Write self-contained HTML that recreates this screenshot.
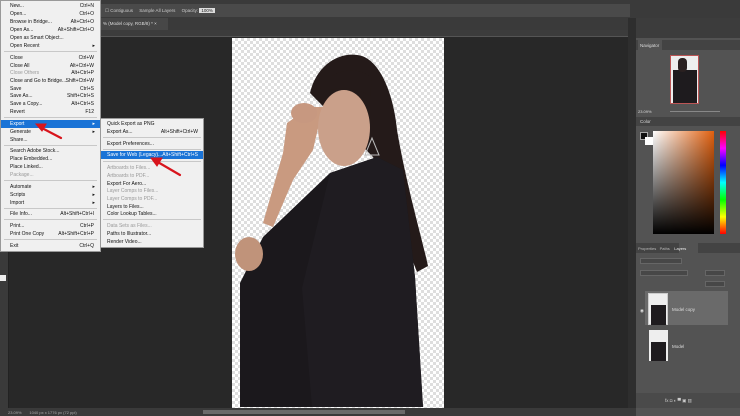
<!DOCTYPE html><html><head><style>
*{margin:0;padding:0;box-sizing:border-box}
body{width:740px;height:416px;overflow:hidden;background:#282828;font-family:"Liberation Sans",sans-serif;position:relative}
.a{position:absolute}
.m{position:absolute;font-size:5px;color:#111;white-space:nowrap;line-height:6px}
.g{color:#999}
.s{position:absolute;height:1px;background:#c8c8c8}
.k{position:absolute;font-size:5px;color:#111;line-height:6px;text-align:right}
.pt{font-size:4.5px;color:#ddd;position:absolute;white-space:nowrap}
</style></head><body>
<div class="a" style="left:0;top:0;width:740px;height:18px;background:#3a3a3a"></div>
<div class="a" style="left:100px;top:4px;width:530px;height:13px;background:#4a4a4a"></div>
<div class="pt" style="left:105px;top:8px;color:#ccc">☐ Contiguous &nbsp;&nbsp;&nbsp; Sample All Layers &nbsp;&nbsp;&nbsp; Opacity: <span style="background:#ddd;color:#222;padding:0 2px">100%</span></div>
<div class="a" style="left:0;top:18px;width:630px;height:12px;background:#3a3a3a"></div>
<div class="a" style="left:100px;top:18px;width:68px;height:12px;background:#474747"></div>
<div class="pt" style="left:103px;top:21px">% (Model copy, RGB/8) * ×</div>
<div class="a" style="left:8px;top:30px;width:620px;height:7px;background:#3c3c3c;border-bottom:1px solid #555"></div>
<div class="a" style="left:0;top:18px;width:9px;height:390px;background:#3a3a3a;border-right:1px solid #222"></div>
<div class="a" style="left:0;top:275px;width:6px;height:6px;background:#eee"></div>
<div class="a" style="left:628px;top:18px;width:8px;height:398px;background:#2e2e2e"></div>
<div class="a" style="left:636px;top:18px;width:104px;height:398px;background:#535353"></div>
<div class="a" style="left:636px;top:18px;width:104px;height:20px;background:#3c3c3c"></div>
<div class="a" style="left:636px;top:40px;width:104px;height:10px;background:#434343"></div>
<div class="a" style="left:638px;top:40px;width:24px;height:10px;background:#535353"></div>
<div class="pt" style="left:640px;top:43px">Navigator</div>
<div class="a" style="left:670px;top:55px;width:29px;height:49px;background:#eee;border:1px solid #b55"></div>
<div class="a" style="left:673px;top:70px;width:24px;height:33px;background:#1e1b1e"></div>
<div class="a" style="left:678px;top:58px;width:9px;height:14px;background:#2a2020;border-radius:4px"></div>
<div class="pt" style="left:638px;top:109px;font-size:4px">23.09%</div>
<div class="a" style="left:670px;top:111px;width:50px;height:1px;background:#888"></div>
<div class="a" style="left:636px;top:117px;width:104px;height:9px;background:#434343"></div>
<div class="pt" style="left:640px;top:119px">Color</div>
<div class="a" style="left:640px;top:132px;width:8px;height:8px;background:#111;border:1px solid #aaa"></div>
<div class="a" style="left:645px;top:137px;width:8px;height:8px;background:#fff"></div>
<div class="a" style="left:653px;top:131px;width:61px;height:103px;background:linear-gradient(to bottom,rgba(0,0,0,0),#000),linear-gradient(to right,#fff,#e0600f)"></div>
<div class="a" style="left:720px;top:131px;width:6px;height:103px;background:linear-gradient(#f00,#f0f,#00f,#0ff,#0f0,#ff0,#f00)"></div>
<div class="a" style="left:636px;top:243px;width:104px;height:10px;background:#434343"></div>
<div class="a" style="left:679px;top:243px;width:19px;height:10px;background:#535353"></div>
<div class="pt" style="left:638px;top:246px;font-size:4px;color:#bbb">Properties &nbsp; Paths &nbsp;&nbsp; <span style="color:#eee">Layers</span></div>
<div class="a" style="left:640px;top:258px;width:42px;height:6px;background:#474747;border:1px solid #666"></div>
<div class="a" style="left:640px;top:270px;width:48px;height:6px;background:#474747;border:1px solid #666"></div>
<div class="a" style="left:705px;top:270px;width:20px;height:6px;background:#474747;border:1px solid #666"></div>
<div class="a" style="left:705px;top:281px;width:20px;height:6px;background:#474747;border:1px solid #666"></div>
<div class="a" style="left:645px;top:291px;width:83px;height:34px;background:#6a6a6a"></div>
<div class="a" style="left:648px;top:293px;width:20px;height:32px;background:#eee;border:1px solid #ccc"></div>
<div class="a" style="left:651px;top:305px;width:15px;height:20px;background:#1e1b1e"></div>
<div class="pt" style="left:672px;top:307px">Model copy</div>
<div class="a" style="left:649px;top:330px;width:19px;height:31px;background:#eee"></div>
<div class="a" style="left:651px;top:342px;width:15px;height:19px;background:#1e1b1e"></div>
<div class="pt" style="left:672px;top:344px">Model</div>
<div class="pt" style="left:640px;top:308px">◉</div>
<div class="a" style="left:636px;top:393px;width:104px;height:15px;background:#4a4a4a"></div>
<div class="pt" style="left:665px;top:398px;color:#ccc">fx ◘ ◐ ▀ ▣ ▥</div>
<div class="a" style="left:232px;top:38px;width:212px;height:370px;background-color:#fff;background-image:linear-gradient(45deg,#dedede 25%,transparent 25%,transparent 75%,#dedede 75%),linear-gradient(45deg,#dedede 25%,transparent 25%,transparent 75%,#dedede 75%);background-size:6px 6px;background-position:0 0,3px 3px"></div>
<svg class="a" style="left:232px;top:38px" width="212" height="370" viewBox="0 0 212 370">
<path d="M78,55 C85,25 110,12 130,18 C150,25 162,60 165,92 C175,150 190,200 196,228 L185,234 L141,119 Z" fill="#241a19"/>
<path d="M55,85 L78,69 L91,69 L81,112 L61,142 L41,189 L31,185 L51,115 Z" fill="#c99a80"/>
<ellipse cx="112" cy="90" rx="26" ry="38" fill="#caa08a"/>
<path d="M84,62 C95,48 120,46 138,58 L140,40 C125,26 92,30 84,62 Z" fill="#241a19"/>
<ellipse cx="72" cy="75" rx="13" ry="10" fill="#c79880"/>
<path d="M31,199 L98,135 L145,119 L171,132 L183,239 L191,369 L8,369 L8,245 Z" fill="#1b181c"/>
<path d="M98,135 L145,119 L171,132 L183,239 L191,369 L80,369 L70,250 Z" fill="#1f1c21"/>
<ellipse cx="17" cy="216" rx="14" ry="17" fill="#c0937a"/>
<path d="M140,100 L147,117 L133,117 Z" fill="none" stroke="#bbb" stroke-width="1"/>
</svg>
<div class="a" style="left:0;top:408px;width:636px;height:8px;background:#3a3a3a"></div>
<div class="a" style="left:203px;top:410px;width:202px;height:4px;background:#6a6a6a"></div>
<div class="pt" style="left:8px;top:410px;font-size:4px;color:#aaa">23.09% &nbsp;&nbsp;&nbsp;&nbsp;&nbsp; 1040 px x 1776 px (72 ppi)</div>
<div class="a" style="left:0;top:0;width:101px;height:252px;background:#f0f0f0;border:1px solid #999"></div>
<div class="a" style="left:1px;top:120px;width:99px;height:8px;background:#1a73d6"></div>
<div class="m" style="left:10px;top:3px">New...</div><div class="k" style="right:646px;top:3px">Ctrl+N</div>
<div class="m" style="left:10px;top:11px">Open...</div><div class="k" style="right:646px;top:11px">Ctrl+O</div>
<div class="m" style="left:10px;top:19px">Browse in Bridge...</div><div class="k" style="right:646px;top:19px">Alt+Ctrl+O</div>
<div class="m" style="left:10px;top:27px">Open As...</div><div class="k" style="right:646px;top:27px">Alt+Shift+Ctrl+O</div>
<div class="m" style="left:10px;top:35px">Open as Smart Object...</div>
<div class="m" style="left:10px;top:43px">Open Recent</div><div class="k" style="right:645px;top:43px">▸</div>
<div class="s" style="left:4px;top:51px;width:93px"></div>
<div class="m" style="left:10px;top:55px">Close</div><div class="k" style="right:646px;top:55px">Ctrl+W</div>
<div class="m" style="left:10px;top:63px">Close All</div><div class="k" style="right:646px;top:63px">Alt+Ctrl+W</div>
<div class="m g" style="left:10px;top:70px">Close Others</div><div class="k g" style="right:646px;top:70px">Alt+Ctrl+P</div>
<div class="m" style="left:10px;top:78px">Close and Go to Bridge...</div><div class="k" style="right:646px;top:78px">Shift+Ctrl+W</div>
<div class="m" style="left:10px;top:86px">Save</div><div class="k" style="right:646px;top:86px">Ctrl+S</div>
<div class="m" style="left:10px;top:93px">Save As...</div><div class="k" style="right:646px;top:93px">Shift+Ctrl+S</div>
<div class="m" style="left:10px;top:101px">Save a Copy...</div><div class="k" style="right:646px;top:101px">Alt+Ctrl+S</div>
<div class="m" style="left:10px;top:109px">Revert</div><div class="k" style="right:646px;top:109px">F12</div>
<div class="s" style="left:4px;top:117px;width:93px"></div>
<div class="m" style="left:10px;top:121px;color:#fff">Export</div><div class="k" style="right:645px;top:121px;color:#fff">▸</div>
<div class="m" style="left:10px;top:129px">Generate</div><div class="k" style="right:645px;top:129px">▸</div>
<div class="m" style="left:10px;top:137px">Share...</div>
<div class="s" style="left:4px;top:145px;width:93px"></div>
<div class="m" style="left:10px;top:148px">Search Adobe Stock...</div>
<div class="m" style="left:10px;top:156px">Place Embedded...</div>
<div class="m" style="left:10px;top:164px">Place Linked...</div>
<div class="m g" style="left:10px;top:172px">Package...</div>
<div class="s" style="left:4px;top:180px;width:93px"></div>
<div class="m" style="left:10px;top:184px">Automate</div><div class="k" style="right:645px;top:184px">▸</div>
<div class="m" style="left:10px;top:192px">Scripts</div><div class="k" style="right:645px;top:192px">▸</div>
<div class="m" style="left:10px;top:200px">Import</div><div class="k" style="right:645px;top:200px">▸</div>
<div class="s" style="left:4px;top:208px;width:93px"></div>
<div class="m" style="left:10px;top:211px">File Info...</div><div class="k" style="right:646px;top:211px">Alt+Shift+Ctrl+I</div>
<div class="s" style="left:4px;top:219px;width:93px"></div>
<div class="m" style="left:10px;top:223px">Print...</div><div class="k" style="right:646px;top:223px">Ctrl+P</div>
<div class="m" style="left:10px;top:231px">Print One Copy</div><div class="k" style="right:646px;top:231px">Alt+Shift+Ctrl+P</div>
<div class="s" style="left:4px;top:239px;width:93px"></div>
<div class="m" style="left:10px;top:243px">Exit</div><div class="k" style="right:646px;top:243px">Ctrl+Q</div>
<div class="a" style="left:100px;top:118px;width:104px;height:130px;background:#f0f0f0;border:1px solid #999"></div>
<div class="a" style="left:101px;top:151px;width:102px;height:8px;background:#1a73d6"></div>
<div class="m" style="left:107px;top:121px">Quick Export as PNG</div>
<div class="m" style="left:107px;top:129px">Export As...</div><div class="k" style="right:542px;top:129px">Alt+Shift+Ctrl+W</div>
<div class="s" style="left:103px;top:137px;width:98px"></div>
<div class="m" style="left:107px;top:141px">Export Preferences...</div>
<div class="s" style="left:103px;top:149px;width:98px"></div>
<div class="m" style="left:107px;top:152px;color:#fff">Save for Web (Legacy)...</div><div class="k" style="right:542px;top:152px;color:#fff">Alt+Shift+Ctrl+S</div>
<div class="s" style="left:103px;top:161px;width:98px"></div>
<div class="m g" style="left:107px;top:165px">Artboards to Files...</div>
<div class="m g" style="left:107px;top:173px">Artboards to PDF...</div>
<div class="m" style="left:107px;top:181px">Export For Aero...</div>
<div class="m g" style="left:107px;top:188px">Layer Comps to Files...</div>
<div class="m g" style="left:107px;top:196px">Layer Comps to PDF...</div>
<div class="m" style="left:107px;top:204px">Layers to Files...</div>
<div class="m" style="left:107px;top:211px">Color Lookup Tables...</div>
<div class="s" style="left:103px;top:219px;width:98px"></div>
<div class="m g" style="left:107px;top:223px">Data Sets as Files...</div>
<div class="m" style="left:107px;top:231px">Paths to Illustrator...</div>
<div class="m" style="left:107px;top:239px">Render Video...</div>
<svg class="a" style="left:0;top:0" width="200" height="200" viewBox="0 0 200 200">
<g stroke="#d8141c" stroke-width="2.2" fill="#d8141c" stroke-linecap="round">
<line x1="61" y1="138" x2="40" y2="127"/><path d="M36,124 L46,124 L42,131 Z" stroke-width="1"/>
<line x1="180" y1="175" x2="156" y2="161"/><path d="M151,158 L162,158 L157,166 Z" stroke-width="1"/>
</g></svg>
</body></html>
